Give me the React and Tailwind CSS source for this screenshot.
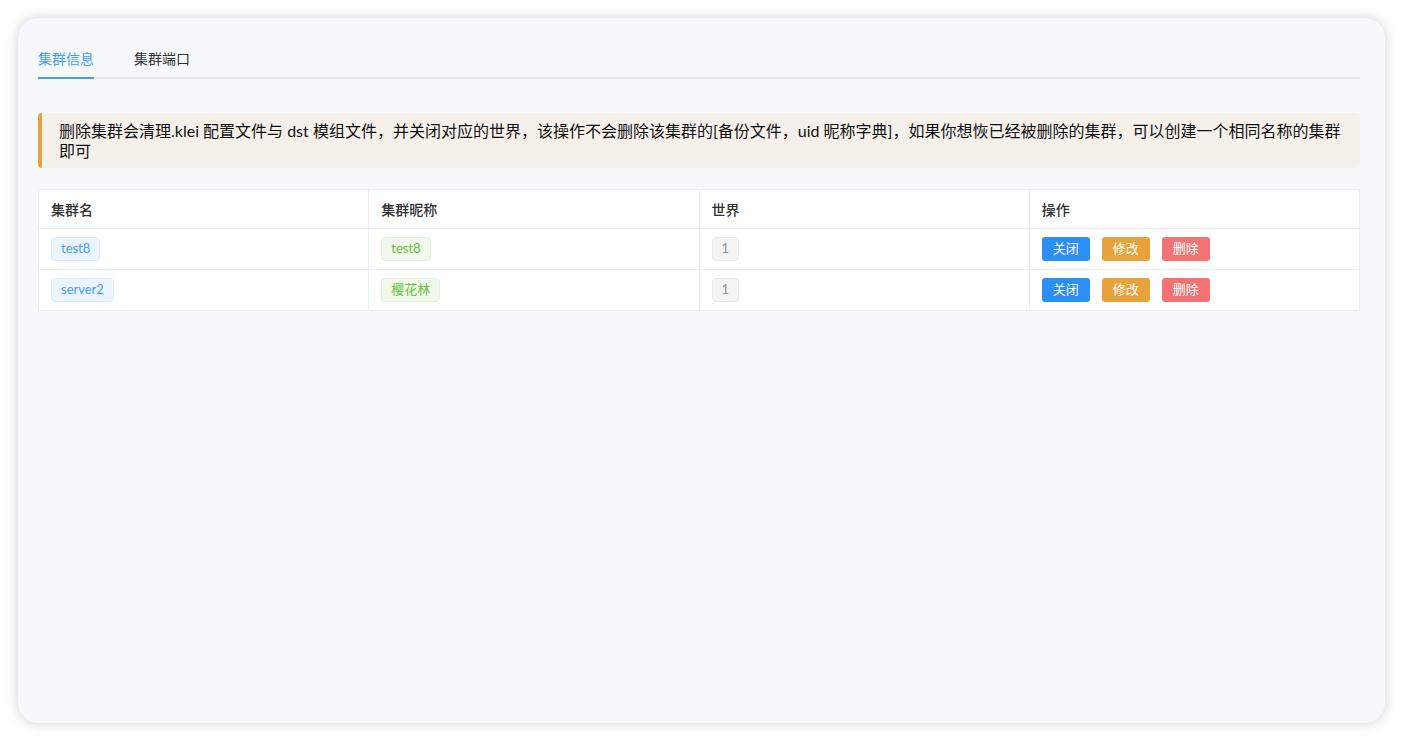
const font = { fontFamily: 'Lato, "Noto Sans CJK SC", sans-serif' };

const clusters = [
  { name: 'test8', nick: 'test8', worlds: 1 },
  { name: 'server2', nick: '樱花林', worlds: 1 },
];

const Tag = ({ color, children }) => {
  const styles = {
    blue: 'bg-[#ecf5ff] border-[#d9ecff] text-[#409eff]',
    green: 'bg-[#f0f9eb] border-[#e1f3d8] text-[#67c23a]',
    gray: 'bg-[#f4f4f5] border-[#e9e9eb] text-[#909399]',
  };
  return (
    <span className={`inline-flex items-center h-[24px] px-[9px] rounded-[4px] border text-[13px] ${styles[color]}`}>
      {children}
    </span>
  );
};

const Btn = ({ color, children }) => (
  <button className={`h-[24px] w-[48px] rounded-[3px] text-white text-[13px] ${color}`}>{children}</button>
);

export default function App() {
  return (
    <div className="min-h-screen bg-white p-[18px]" style={font}>
      <div className="h-[705px] rounded-[20px] bg-[#f7f8fc] shadow-[0_0_14px_rgba(0,0,0,0.18)] pt-[21px] pl-[20px] pr-[25px]">
        {/* tabs */}
        <div className="flex h-[40px] border-b-2 border-[#e4e7ed]">
          <div className="relative pr-[40px] flex items-center text-[14px] text-[#409eff]">
            集群信息
            <div className="absolute left-0 right-[40px] bottom-[-2px] h-[2px] bg-[#409eff]" />
          </div>
          <div className="flex items-center text-[14px] text-[#303133]">集群端口</div>
        </div>

        {/* warning */}
        <div className="mt-[34px] rounded-[4px] border-l-4 border-[#e6a23c] bg-[#f5f0ea] pl-[17px] pr-[16px] pt-[8px] pb-[7px] text-[16px] leading-[20px] text-[#111]">
          删除集群会清理.klei 配置文件与 dst 模组文件，并关闭对应的世界，该操作不会删除该集群的[备份文件，uid 昵称字典]，如果你想恢已经被删除的集群，可以创建一个相同名称的集群即可
        </div>

        {/* table */}
        <table className="mt-[21px] w-full table-fixed border-collapse bg-white text-[14px]">
          <thead>
            <tr className="h-[39px]">
              {['集群名', '集群昵称', '世界', '操作'].map((h) => (
                <th key={h} className="border border-[#ebeef5] px-[12px] text-left font-medium text-[#303133]">
                  {h}
                </th>
              ))}
            </tr>
          </thead>
          <tbody>
            {clusters.map((c) => (
              <tr key={c.name} className="h-[41px]">
                <td className="border border-[#ebeef5] px-[12px]">
                  <Tag color="blue">{c.name}</Tag>
                </td>
                <td className="border border-[#ebeef5] px-[12px]">
                  <Tag color="green">{c.nick}</Tag>
                </td>
                <td className="border border-[#ebeef5] px-[12px]">
                  <Tag color="gray">{c.worlds}</Tag>
                </td>
                <td className="border border-[#ebeef5] px-[12px]">
                  <div className="flex gap-[12px]">
                    <Btn color="bg-[#2b8ff5]">关闭</Btn>
                    <Btn color="bg-[#e6a23c]">修改</Btn>
                    <Btn color="bg-[#f37272]">删除</Btn>
                  </div>
                </td>
              </tr>
            ))}
          </tbody>
        </table>
      </div>
    </div>
  );
}
